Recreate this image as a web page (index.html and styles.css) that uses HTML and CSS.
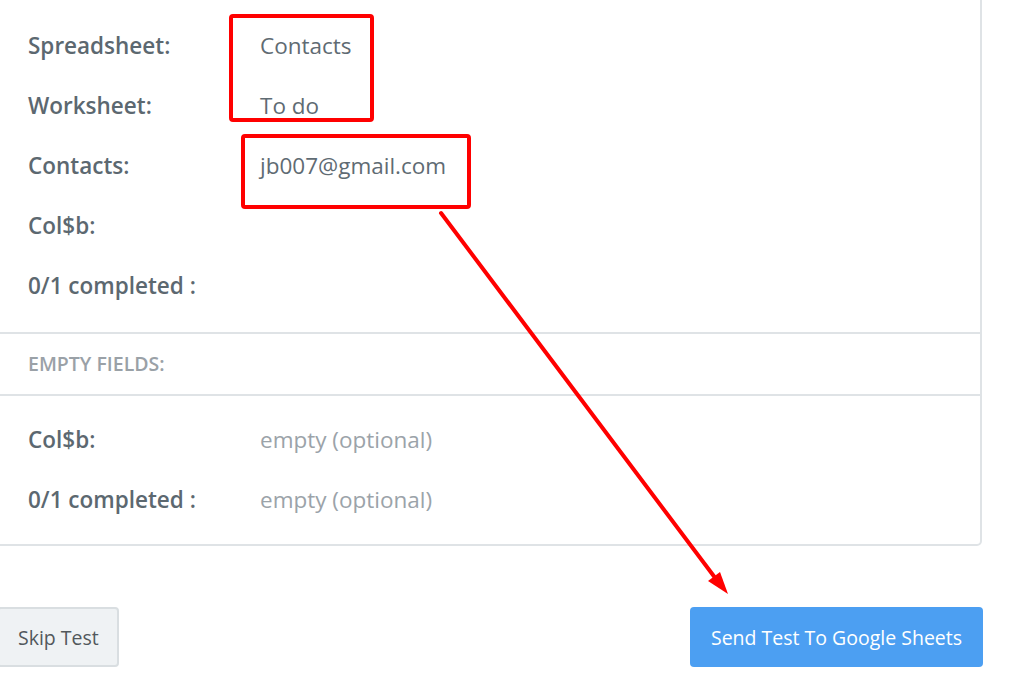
FILE: index.html
```html
<!DOCTYPE html>
<html lang="en">
<head>
    <meta charset="UTF-8">
    <title>Test Google Sheets</title>
    <link rel="stylesheet" href="styles.css">
</head>
<body>
    <div class="page">
        <div class="card">
            <!-- Filled fields -->
            <div class="fields">
                <div class="row"><span class="label">Spreadsheet:</span><span class="value">Contacts</span></div>
                <div class="row"><span class="label">Worksheet:</span><span class="value">To do</span></div>
                <div class="row"><span class="label">Contacts:</span><span class="value">jb007@gmail.com</span></div>
                <div class="row"><span class="label">Col$b:</span><span class="value"></span></div>
                <div class="row"><span class="label">0/1 completed :</span><span class="value"></span></div>
            </div>

            <div class="section-title">EMPTY FIELDS:</div>

            <!-- Empty fields -->
            <div class="fields fields-empty">
                <div class="row"><span class="label">Col$b:</span><span class="value empty">empty (optional)</span></div>
                <div class="row"><span class="label">0/1 completed :</span><span class="value empty">empty (optional)</span></div>
            </div>
        </div>

        <div class="actions">
            <button class="btn btn-skip">Skip Test</button>
            <button class="btn btn-send">Send Test To Google Sheets</button>
        </div>

        <!-- Red annotations drawn over the screenshot -->
        <svg class="annotations" width="1010" height="680" viewBox="0 0 1010 680">
            <rect x="231" y="18" width="141" height="104" rx="2" fill="none" stroke="#ff0000" stroke-width="4"/>
            <rect x="243" y="138" width="226" height="71" rx="2" fill="none" stroke="#ff0000" stroke-width="4"/>
            <line x1="441" y1="215" x2="716" y2="581" stroke="#ff0000" stroke-width="4" stroke-linecap="round"/>
            <polygon points="708,583 720,574 728,596" fill="#ff0000"/>
        </svg>
    </div>
</body>
</html>
```

FILE: styles.css
```css
html, body {
    margin: 0;
    padding: 0;
    background: #fff;
}
body {
    font-family: "Open Sans", "Noto Sans", sans-serif;
    color: #5f6b73;
    width: 1010px;
    height: 680px;
    overflow: hidden;
}
.page {
    position: relative;
    width: 1010px;
    height: 680px;
}
.card {
    margin: -2px 0 0 -20px;
    width: 998px;
    border: 2px solid #dfe3e6;
    border-radius: 0 0 5px 5px;
    background: #fff;
}
.fields {
    padding: 15px 0 17px;
}
.fields-empty {
    padding: 13px 0 15px;
}
.row {
    display: grid;
    grid-template-columns: 232px 1fr;
    padding-left: 46px;
    height: 60px;
    align-items: center;
    font-size: 22.5px;
}
.label {
    font-weight: 600;
    color: #5c6870;
}
.value {
    color: #5f6b73;
}
.value.empty {
    color: #9ba3a9;
}
.section-title {
    border-top: 2px solid #dfe3e6;
    border-bottom: 2px solid #dfe3e6;
    height: 60px;
    line-height: 60px;
    padding-left: 46px;
    font-size: 19.5px;
    font-weight: 600;
    color: #9aa1a7;
}
.actions {
    display: flex;
    justify-content: space-between;
    margin: 61px 27px 0 -3px;
}
.btn {
    font-family: inherit;
    font-size: 19.5px;
    height: 60px;
    border-radius: 4px;
    cursor: pointer;
}
.btn-skip {
    padding: 0 18px 0 19px;
    background: #eff2f4;
    border: 2px solid #d9dee1;
    color: #52585c;
}
.btn-send {
    padding: 0 20px;
    width: 293px;
    background: #4c9ff2;
    border: none;
    color: #fff;
}
.annotations {
    position: absolute;
    top: 0;
    left: 0;
    pointer-events: none;
}
```
